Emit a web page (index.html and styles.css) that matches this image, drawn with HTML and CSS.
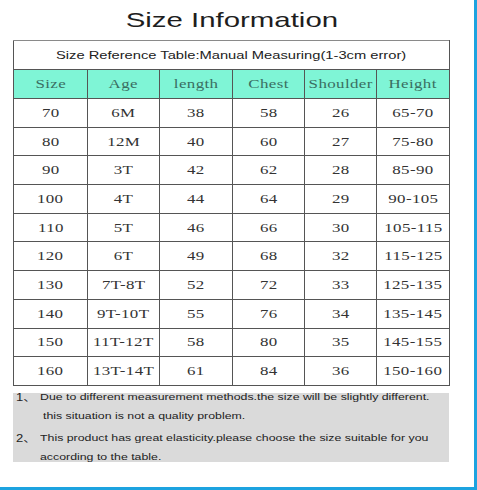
FILE: index.html
```html
<!DOCTYPE html>
<html>
<head>
<meta charset="utf-8">
<link rel="stylesheet" href="styles.css">
</head>
<body>
<div class="frame">
  <div class="sheet">
    <div class="title"><span class="wide">Size Information</span></div>
    <table class="size-table">
      <colgroup>
        <col class="c1"><col class="c2"><col class="c3"><col class="c4"><col class="c5"><col class="c6">
      </colgroup>
      <tr class="ref-row"><td colspan="6"><span class="wide">Size Reference Table:Manual Measuring(1-3cm error)</span></td></tr>
      <tr class="head-row"><td><span class="v">Size</span></td><td><span class="v">Age</span></td><td><span class="v">length</span></td><td><span class="v">Chest</span></td><td><span class="v">Shoulder</span></td><td><span class="v">Height</span></td></tr>
      <tr><td><span class="v">70</span></td><td><span class="v">6M</span></td><td><span class="v">38</span></td><td><span class="v">58</span></td><td><span class="v">26</span></td><td><span class="v">65-70</span></td></tr>
      <tr><td><span class="v">80</span></td><td><span class="v">12M</span></td><td><span class="v">40</span></td><td><span class="v">60</span></td><td><span class="v">27</span></td><td><span class="v">75-80</span></td></tr>
      <tr><td><span class="v">90</span></td><td><span class="v">3T</span></td><td><span class="v">42</span></td><td><span class="v">62</span></td><td><span class="v">28</span></td><td><span class="v">85-90</span></td></tr>
      <tr><td><span class="v">100</span></td><td><span class="v">4T</span></td><td><span class="v">44</span></td><td><span class="v">64</span></td><td><span class="v">29</span></td><td><span class="v">90-105</span></td></tr>
      <tr><td><span class="v">110</span></td><td><span class="v">5T</span></td><td><span class="v">46</span></td><td><span class="v">66</span></td><td><span class="v">30</span></td><td><span class="v">105-115</span></td></tr>
      <tr><td><span class="v">120</span></td><td><span class="v">6T</span></td><td><span class="v">49</span></td><td><span class="v">68</span></td><td><span class="v">32</span></td><td><span class="v">115-125</span></td></tr>
      <tr><td><span class="v">130</span></td><td><span class="v">7T-8T</span></td><td><span class="v">52</span></td><td><span class="v">72</span></td><td><span class="v">33</span></td><td><span class="v">125-135</span></td></tr>
      <tr><td><span class="v">140</span></td><td><span class="v">9T-10T</span></td><td><span class="v">55</span></td><td><span class="v">76</span></td><td><span class="v">34</span></td><td><span class="v">135-145</span></td></tr>
      <tr><td><span class="v">150</span></td><td><span class="v">11T-12T</span></td><td><span class="v">58</span></td><td><span class="v">80</span></td><td><span class="v">35</span></td><td><span class="v">145-155</span></td></tr>
      <tr><td><span class="v">160</span></td><td><span class="v">13T-14T</span></td><td><span class="v">61</span></td><td><span class="v">84</span></td><td><span class="v">36</span></td><td><span class="v">150-160</span></td></tr>
    </table>
    <div class="notes">
      <div class="note first">
        <span class="num"><span class="num-t">1、</span></span>
        <div class="lines">
          <div class="line"><span class="wide-l">Due to different measurement methods.the size will be slightly different.</span></div>
          <div class="line indent"><span class="wide-l">this situation is not a quality problem.</span></div>
        </div>
      </div>
      <div class="note second">
        <span class="num"><span class="num-t">2、</span></span>
        <div class="lines">
          <div class="line"><span class="wide-l">This product has great elasticity.please choose the size suitable for you</span></div>
          <div class="line"><span class="wide-l">according to the table.</span></div>
        </div>
      </div>
    </div>
  </div>
</div>
</body>
</html>
```
FILE: styles.css
```css
html, body {
  margin: 0;
  padding: 0;
  background: #ffffff;
}

.frame {
  width: 477px;
  height: 490px;
  box-sizing: border-box;
  border-right: 3px solid #1ca3e0;
  border-bottom: 3px solid #1ca3e0;
  overflow: hidden;
}

.sheet {
  margin-left: 13px;
  width: 436px;
}

.title {
  height: 40px;
  line-height: 40px;
  text-align: center;
  font-family: "Liberation Sans", Arial, sans-serif;
  font-size: 21px;
  color: #1e1e1e;
  padding-left: 2px;
}

.wide {
  display: inline-block;
  transform: scaleX(1.4);
  transform-origin: center;
}

.size-table {
  width: 436px;
  border-collapse: collapse;
  table-layout: fixed;
  font-family: "Liberation Serif", "Times New Roman", serif;
  font-size: 13px;
  color: #333;
}

.c1 { width: 74px; }
.c2 { width: 72px; }
.c3 { width: 73px; }
.c4 { width: 72px; }
.c5 { width: 72px; }
.c6 { width: 73px; }

.size-table td {
  border: 1px solid #555;
  text-align: center;
  padding: 0;
  height: 27.7px;
  white-space: nowrap;
  overflow: visible;
}

.v {
  display: inline-block;
  transform: scaleX(1.3);
  transform-origin: center;
  letter-spacing: 0.3px;
}

.size-table .ref-row td {
  height: 28px;
  border-top-color: #8a8a8a;
  font-family: "Liberation Sans", Arial, sans-serif;
  font-size: 10.5px;
  color: #222;
}

.size-table .head-row td {
  height: 28px;
  background: #7ff5d6;
  color: #3a6e62;
}

.notes {
  margin-top: 7px;
  height: 69px;
  background: #dadada;
  overflow: hidden;
  font-family: "Liberation Sans", Arial, "Noto Sans CJK SC", sans-serif;
  font-size: 9px;
  color: #222;
}

.note {
  display: flex;
}

.note.first {
  margin-top: -4.5px;
}

.note.second {
  margin-top: 3px;
}

.num {
  width: 27px;
  padding-left: 3px;
  box-sizing: border-box;
  line-height: 19px;
  font-family: "Liberation Sans", "Noto Sans CJK SC", sans-serif;
  font-size: 10px;
  flex-shrink: 0;
}

.num-t {
  display: inline-block;
  transform: scaleX(1.3);
  transform-origin: left center;
}

.lines {
  flex: 1;
}

.line {
  height: 19px;
  line-height: 19px;
  white-space: nowrap;
}

.line.indent {
  padding-left: 3px;
}

.wide-l {
  display: inline-block;
  transform: scaleX(1.37);
  transform-origin: left center;
}
```
